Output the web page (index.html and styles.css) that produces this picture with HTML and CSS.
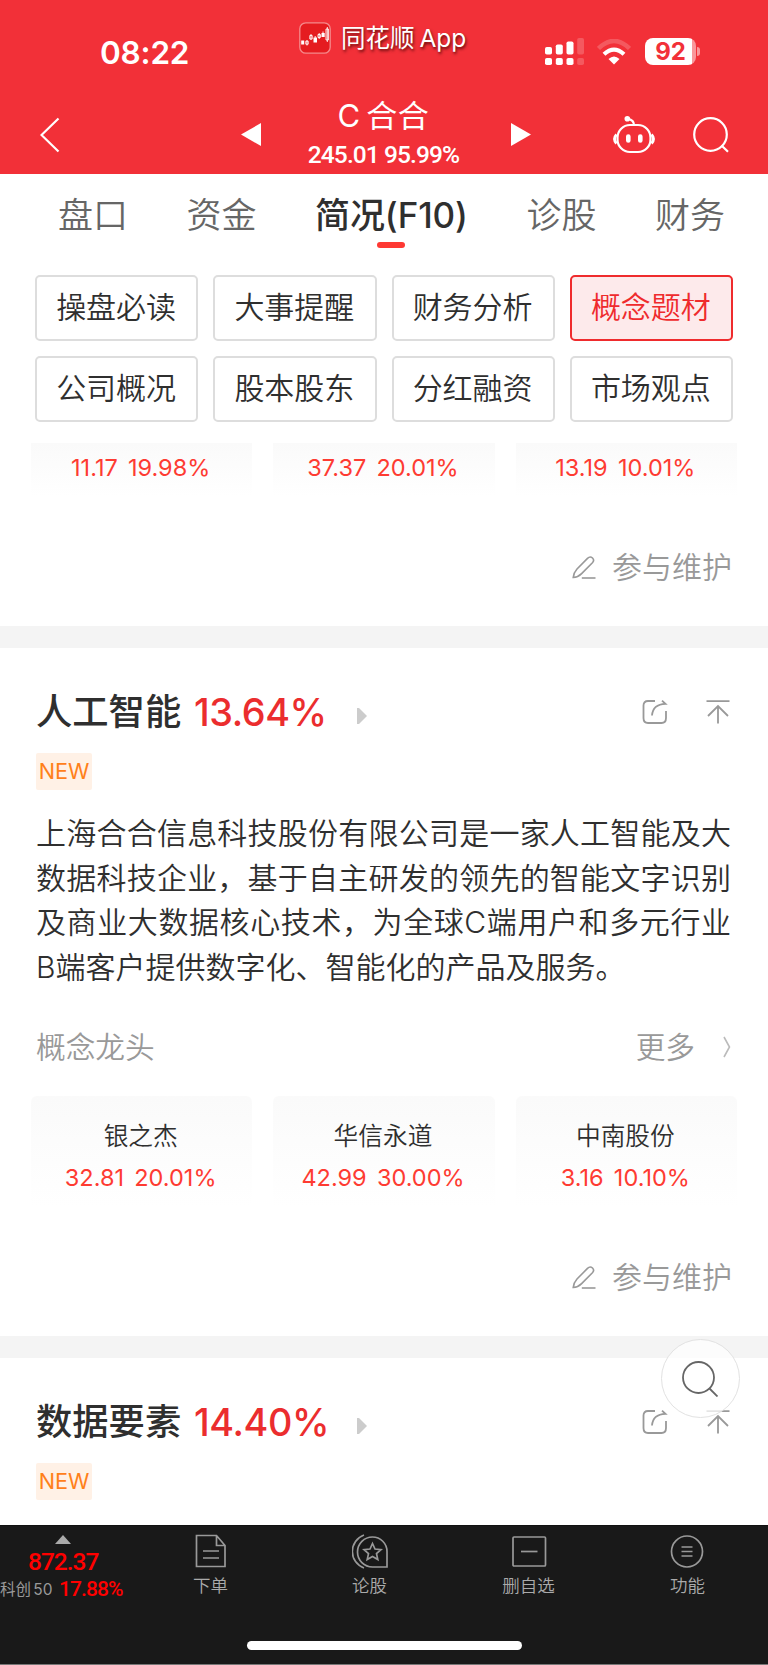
FILE: index.html
```html
<!DOCTYPE html>
<html lang="zh-CN">
<head>
  <meta charset="UTF-8" />
  <meta name="viewport" content="width=device-width, initial-scale=1.0" />
  <title>C合合 - 概念题材</title>
  <link rel="stylesheet" href="styles.css">
</head>
<body>
  <svg class="defs" width="0" height="0">
    <symbol id="icon-pen" viewBox="0 0 24 24">
      <path d="M1.2 21.5C1.6 17.5 3 15.2 5 13L15.5 2.4C17 .9 19.2 .8 20.5 2C21.9 3.4 21.8 5.3 20.4 6.8L9.6 17.6C7.4 19.8 5 21.3 1.2 21.5Z" />
      <path d="M9.8 22H23.5" />
    </symbol>
    <symbol id="icon-share" viewBox="0 0 26 26">
      <path d="M13 2H6Q1.5 2 1.5 6.500V19Q1.500 24 6 24H19.500Q24 24 24 19V12" />
      <path d="M10 16.500C10.500 10 14.500 5 23.500 4.800L20 1.600" />
    </symbol>
    <symbol id="icon-top" viewBox="0 0 24 26">
      <path d="M.5 2.200H23.500M12 7V24.500M2 17L12 7L22 17" />
    </symbol>
  </svg>

  <header class="header">
    <div class="status">
      <span class="time">08:22</span>
      <div class="app">
        <svg class="app-logo" viewBox="0 0 32 32">
          <rect x=".8" y=".8" width="30.400" height="30.400" rx="6" fill="#e51c20" stroke="#f58a8c" stroke-width="1.300" />
          <g fill="#fff">
            <rect x="2.200" y="18.500" width="3" height="4" />
            <rect x="14.500" y="15.500" width="3.500" height="5" />
            <rect x="22.500" y="11" width="3.200" height="4" />
          </g>
          <g fill="none" stroke="#fff" stroke-width=".9">
            <path d="M8 18V23.500M6.800 19.200H9.200V22.200H6.800ZM12 12V18M10.800 13.500H13.200V17H10.800ZM16.200 14V16M20.200 11V17M19 12.500H21.400V15.500H19ZM24 9.500V11M28.300 5V20M27 7H29.400V18H27Z" />
          </g>
        </svg>
        <span>同花顺 App</span>
      </div>
      <div class="signals">
        <svg class="cell" viewBox="0 0 39 28">
          <rect x="0" y="9" width="7" height="7.500" rx="1.800" />
          <rect x="10.800" y="6.500" width="7" height="10" rx="1.800" />
          <rect x="21.500" y="3.500" width="7" height="13" rx="1.800" />
          <rect x="32.200" y="0" width="6.800" height="16.500" rx="1.800" opacity=".2" />
          <rect x="0" y="20" width="7" height="7" rx="1.800" />
          <rect x="10.800" y="20" width="7" height="7" rx="1.800" />
          <rect x="21.500" y="20" width="7" height="7" rx="1.800" />
          <rect x="32.200" y="20" width="6.800" height="7" rx="1.800" opacity=".2" />
        </svg>
        <svg class="wifi" viewBox="0 0 34 26" stroke="#fff">
          <path d="M1.500 9.500Q17-5.500 32.500 9.500" stroke-width="4.500" opacity=".2" />
          <path d="M7 15.200Q17 6 27 15.200" stroke-width="4.200" />
          <path d="M11.500 20Q17 15 22.500 20L17 25.500Z" fill="#fff" stroke="none" />
        </svg>
        <div class="battery"><span>92</span></div>
      </div>
    </div>
    <div class="navbar">
      <svg class="back" viewBox="0 0 20 36"><path d="M18.500 1.500L1.500 18L18.500 34.500" /></svg>
      <div class="stock">
        <svg class="arrow" viewBox="0 0 20 23"><path d="M20 0V23L0 11.500Z" fill="#fff" /></svg>
        <div class="stock-name">
          <h1>C 合合</h1>
          <p>245.01 95.99%</p>
        </div>
        <svg class="arrow" viewBox="0 0 20 23"><path d="M0 0V23L20 11.500Z" fill="#fff" /></svg>
      </div>
      <svg class="robot" viewBox="0 0 42 38">
        <rect x="4.500" y="9" width="33" height="27" rx="12.500" />
        <path d="M3.500 18.500Q-.5 23 3.500 27.500M38.500 18.500Q42.500 23 38.500 27.500" stroke-width="2.800" />
        <path d="M21 9C21 5 18.500 3.500 15 2.800" />
        <circle cx="14.300" cy="2.800" r="2.800" fill="#fff" stroke="none" />
        <path d="M15.300 20.500V24.500M27.300 20.500V24.500" stroke-width="4.600" stroke-linecap="round" />
      </svg>
      <svg class="search" viewBox="0 0 36 36"><circle cx="17.500" cy="17.500" r="16.300" /><path d="M28.500 28.500L35 34.800" /></svg>
    </div>
  </header>

  <main class="content">
    <nav class="tabs">
      <a>盘口</a>
      <a>资金</a>
      <a class="active">简况(F10)</a>
      <a>诊股</a>
      <a>财务</a>
    </nav>

    <div class="menu">
      <button>操盘必读</button>
      <button>大事提醒</button>
      <button>财务分析</button>
      <button class="active">概念题材</button>
      <button>公司概况</button>
      <button>股本股东</button>
      <button>分红融资</button>
      <button>市场观点</button>
    </div>

    <section class="concept concept-first">
      <div class="leaders leaders-cut">
        <div class="leader"><p>11.17&nbsp; 19.98%</p></div>
        <div class="leader"><p>37.37&nbsp; 20.01%</p></div>
        <div class="leader"><p>13.19&nbsp; 10.01%</p></div>
      </div>
      <div class="maintain"><svg><use href="#icon-pen" /></svg>参与维护</div>
    </section>

    <section class="concept">
      <div class="concept-head">
        <h2>人工智能</h2>
        <strong>13.64%</strong>
        <svg class="play" viewBox="0 0 10 16"><path d="M0 0H2L10 8L2 16H0Z" /></svg>
        <svg class="share"><use href="#icon-share" /></svg>
        <svg class="top"><use href="#icon-top" /></svg>
      </div>
      <span class="tag">NEW</span>
      <p class="desc">上海合合信息科技股份有限公司是一家人工智能及大数据科技企业，基于自主研发的领先的智能文字识别及商业大数据核心技术，为全球C端用户和多元行业B端客户提供数字化、智能化的产品及服务。</p>
      <div class="more-row">
        <span>概念龙头</span>
        <span class="more">更多<svg viewBox="0 0 8 22"><path d="M1 1L6.500 11L1 21" /></svg></span>
      </div>
      <div class="leaders">
        <div class="leader"><h3>银之杰</h3><p>32.81&nbsp; 20.01%</p></div>
        <div class="leader"><h3>华信永道</h3><p>42.99&nbsp; 30.00%</p></div>
        <div class="leader"><h3>中南股份</h3><p>3.16&nbsp; 10.10%</p></div>
      </div>
      <div class="maintain"><svg><use href="#icon-pen" /></svg>参与维护</div>
    </section>

    <section class="concept">
      <div class="concept-head">
        <h2>数据要素</h2>
        <strong>14.40%</strong>
        <svg class="play" viewBox="0 0 10 16"><path d="M0 0H2L10 8L2 16H0Z" /></svg>
        <svg class="share"><use href="#icon-share" /></svg>
        <svg class="top"><use href="#icon-top" /></svg>
      </div>
      <span class="tag">NEW</span>
    </section>

    <button class="float-search">
      <svg viewBox="0 0 36 36"><circle cx="16.500" cy="16.500" r="15.500" /><path d="M27.500 27.500L35.500 35.500" /></svg>
    </button>
  </main>

  <footer class="footer">
    <div class="index">
      <svg class="up" viewBox="0 0 16 9"><path d="M8 0L16 9H0Z" fill="#aaa" /></svg>
      <b>872.37</b>
      <p><span>科创 50</span> <b>17.88%</b></p>
    </div>
    <a class="item">
      <svg viewBox="0 0 36 36"><path d="M3.500 2.500H23.500L32 12.500V33.500H3.500ZM23.500 2.500V12.500H32M10 18H26M10 25H26" /></svg>
      <span>下单</span>
    </a>
    <a class="item">
      <svg viewBox="0 0 36 36"><path d="M20.500 4A14.500 14.500 0 1 0 20.500 34H35V18.500A14.500 14.500 0 0 0 20.500 4Z" /><path d="M12 2A17.500 17.500 0 0 0 12 35" /><path d="M20.500 10.500L23 16L29 16.600L24.500 20.600L25.800 26.500L20.500 23.500L15.200 26.500L16.500 20.600L12 16.600L18 16Z" /></svg>
      <span>论股</span>
    </a>
    <a class="item">
      <svg viewBox="0 0 36 36"><rect x="2" y="4" width="32.500" height="29" rx="1" /><path d="M10 18.500H26.500" /></svg>
      <span>删自选</span>
    </a>
    <a class="item">
      <svg viewBox="0 0 36 36"><circle cx="17" cy="18.500" r="15.500" /><path d="M11.500 14H22.500M11.500 18.500H22.500M11.500 23H22.500" /></svg>
      <span>功能</span>
    </a>
    <div class="home-bar"></div>
  </footer>
</body>
</html>
```

FILE: styles.css
```css
* {
  margin: 0;
  padding: 0;
  box-sizing: border-box;
}
body {
  width: 768px;
  height: 1665px;
  overflow: hidden;
  background-color: #fff;
  color: #2f2f2f;
  font-family: Inter, 'Noto Sans CJK SC', sans-serif;
}
svg {
  display: block;
  flex: none;
  fill: none;
}
.defs {
  position: absolute;
}
button {
  background: none;
  font-family: inherit;
  color: inherit;
}

/* header */
.header {
  height: 174px;
  background-color: #f23038;
  color: #fff;
}
.status {
  height: 92px;
  display: flex;
  padding-left: 100px;
}
.time {
  width: 199px;
  padding-top: 33px;
  font-size: 31.5px;
  line-height: 40px;
  font-weight: 600;
  letter-spacing: -0.2px;
}
.app {
  width: 246px;
  height: 32px;
  margin-top: 22px;
  display: flex;
  align-items: center;
  gap: 10px;
  font-size: 24.5px;
  line-height: 32px;
  font-weight: 380;
  word-spacing: -2px;
  white-space: nowrap;
  text-shadow: 1px 2px 3px rgba(60, 0, 0, 0.8);
}
.app-logo {
  width: 32px;
  height: 32px;
}
.signals {
  height: 28px;
  margin-top: 38px;
  display: flex;
}
.cell {
  width: 39px;
  height: 28px;
  fill: #fff;
}
.wifi {
  width: 34px;
  height: 26px;
  margin: 1px 14px 0 13px;
}
.battery {
  position: relative;
  width: 51px;
  height: 27px;
  border-radius: 8px;
  background: linear-gradient(to right, #fff 47px, #f9979b 47px);
  color: #f23038;
  font-size: 24px;
  line-height: 27px;
  font-weight: 700;
  text-align: center;
}
.battery::after {
  content: "";
  position: absolute;
  left: 52px;
  top: 9px;
  width: 3px;
  height: 9px;
  border-radius: 0 4px 4px 0;
  background-color: #f9979b;
}
.navbar {
  height: 82px;
  display: flex;
  padding-left: 40px;
  stroke: #fff;
  stroke-width: 2.2;
}
.back {
  width: 20px;
  height: 36px;
  margin: 25px 181px 0 0;
}
.stock {
  width: 290px;
  display: flex;
  justify-content: space-between;
  stroke: none;
}
.arrow {
  width: 20px;
  height: 23px;
  margin-top: 31px;
}
.stock-name {
  margin-left: -5px;
  text-align: center;
  white-space: nowrap;
}
.stock-name h1 {
  height: 49px;
  padding-top: 4px;
  font-size: 31px;
  line-height: 40px;
  font-weight: 380;
  letter-spacing: 0.7px;
  word-spacing: -4px;
}
.stock-name p {
  font-family: Roboto, sans-serif;
  font-size: 24.5px;
  line-height: 28px;
  font-weight: 500;
  letter-spacing: -0.9px;
}
.robot {
  width: 42px;
  height: 38px;
  margin: 24px 38px 0 82px;
}
.search {
  width: 36px;
  height: 36px;
  margin-top: 25px;
}

/* page */
.content {
  position: relative;
  height: 1351px;
  overflow: hidden;
}
.tabs {
  height: 101px;
  padding: 21px 43px 0 58px;
  display: flex;
  justify-content: space-between;
  color: #666;
  font-size: 35px;
  line-height: 40px;
  font-weight: 350;
}
.tabs .active {
  position: relative;
  color: #2f2f2f;
  font-weight: 500;
  letter-spacing: -0.1px;
}
.tabs .active::after {
  content: "";
  position: absolute;
  left: 50%;
  top: 47px;
  width: 28px;
  height: 6px;
  margin-left: -14px;
  border-radius: 3px;
  background-color: #fe3933;
}
.menu {
  display: grid;
  grid-template-columns: repeat(4, 1fr);
  grid-auto-rows: 66px;
  gap: 15px;
  padding: 0 35px;
}
.menu button {
  padding: 0 1px 2px 0;
  border: 2px solid #ddd;
  border-radius: 5px;
  font-size: 30px;
  line-height: 40px;
  font-weight: 350;
}
.menu .active {
  border-color: #ef2b2d;
  background-color: #fdeaeb;
  color: #ef2b2d;
}
.concept {
  height: 710px;
  padding-top: 39px;
  border-bottom: 22px solid #f4f4f4;
}
.concept-first {
  height: 226px;
  padding-top: 21px;
}
.leaders {
  display: grid;
  grid-template-columns: repeat(3, 1fr);
  gap: 21px;
  padding: 0 31px;
}
.leader {
  height: 111px;
  padding-top: 22px;
  border-radius: 6px 6px 0 0;
  background: linear-gradient(#fafafa, #fff);
  text-align: center;
}
.leader h3 {
  padding-right: 2px;
  font-size: 24.7px;
  line-height: 36px;
  font-weight: 350;
}
.leader p {
  margin-top: 6px;
  padding-right: 2px;
  color: #fe3b32;
  font-size: 23.5px;
  line-height: 36px;
  font-weight: 380;
  word-spacing: -1.5px;
}
.leaders-cut .leader {
  height: 54px;
  padding-top: 1px;
  border-radius: 0;
}
.maintain {
  display: flex;
  justify-content: flex-end;
  align-items: center;
  gap: 16px;
  margin: 50px 36px 0 0;
  color: #999;
  font-size: 30px;
  line-height: 40px;
  font-weight: 350;
}
.maintain svg {
  width: 24px;
  height: 24px;
  margin-top: 2px;
  stroke: #999;
  stroke-width: 1.6;
}
.concept-head {
  display: flex;
  align-items: center;
  height: 50px;
  padding: 0 38px 0 36px;
}
.concept-head h2 {
  width: 158px;
  font-size: 36.3px;
  line-height: 50px;
  font-weight: 500;
}
.concept-head strong {
  width: 163px;
  color: #eb2d2e;
  font-size: 37.8px;
  line-height: 48px;
  font-weight: 550;
  letter-spacing: -0.4px;
}
.concept-head .play {
  width: 10px;
  height: 16px;
  margin-top: 8px;
  fill: #ccc;
}
.share {
  width: 26px;
  height: 26px;
  margin-left: auto;
  stroke: #999;
  stroke-width: 1.8;
}
.top {
  width: 24px;
  height: 26px;
  margin-left: 38px;
  stroke: #999;
  stroke-width: 1.8;
}
.tag {
  display: block;
  width: 56px;
  height: 37px;
  margin: 16px 0 0 36px;
  border-radius: 2px;
  background-color: #fff1e6;
  color: #ff801a;
  font-size: 21.7px;
  line-height: 37px;
  font-weight: 380;
  text-align: center;
}
.desc {
  width: 695px;
  margin: 21px 0 0 36px;
  font-size: 30px;
  line-height: 44.67px;
  font-weight: 350;
  text-align: justify;
}
.more-row {
  display: flex;
  justify-content: space-between;
  margin-top: 37px;
  padding: 0 37px 0 36px;
  color: #999;
  font-size: 29.7px;
  line-height: 40px;
  font-weight: 350;
}
.more {
  display: flex;
  align-items: center;
  gap: 28px;
}
.more svg {
  width: 8px;
  height: 22px;
  stroke: #bbb;
  stroke-width: 1.6;
}
.more-row + .leaders {
  margin-top: 29px;
}
.float-search {
  position: absolute;
  left: 661px;
  top: 1165px;
  width: 79px;
  height: 79px;
  border: 1px solid #e2e2e2;
  border-radius: 50%;
  background-color: rgba(255, 255, 255, 0.75);
}
.float-search svg {
  width: 36px;
  height: 36px;
  margin-left: 20px;
  stroke: #666;
  stroke-width: 1.8;
}

/* bottom bar */
.footer {
  position: relative;
  height: 140px;
  padding-top: 9px;
  display: flex;
  border-top: 1px solid #111;
  border-bottom: 1px solid #777;
  background-color: #191919;
}
.index {
  width: 131px;
  color: #f00;
  font-family: Roboto, 'Noto Sans CJK SC', sans-serif;
  font-weight: 500;
}
.index .up {
  width: 16px;
  height: 9px;
  margin-left: 55px;
}
.index b {
  display: block;
  margin-left: 28px;
  font-size: 24.5px;
  line-height: 35px;
  font-weight: 500;
  letter-spacing: -1px;
}
.index p {
  display: flex;
  align-items: center;
  margin-top: -2px;
  line-height: 22px;
  white-space: nowrap;
}
.index p span {
  width: 59px;
  padding-top: 2px;
  color: #999;
  font-family: Inter, 'Noto Sans CJK SC', sans-serif;
  font-size: 15.5px;
  font-weight: 380;
  word-spacing: -2px;
}
.index p b {
  margin-left: 0;
  font-size: 21px;
  line-height: 22px;
  letter-spacing: -0.9px;
}
.item {
  width: 159px;
  display: flex;
  flex-direction: column;
  align-items: center;
  color: #aaa;
  font-size: 17.5px;
  line-height: 24px;
  font-weight: 350;
}
.item svg {
  width: 36px;
  height: 36px;
  margin: -2px 0 5px;
  stroke: #999;
  stroke-width: 1.7;
}
.home-bar {
  position: absolute;
  left: 247px;
  bottom: 14px;
  width: 275px;
  height: 9px;
  border-radius: 5px;
  background-color: #fff;
}
```
